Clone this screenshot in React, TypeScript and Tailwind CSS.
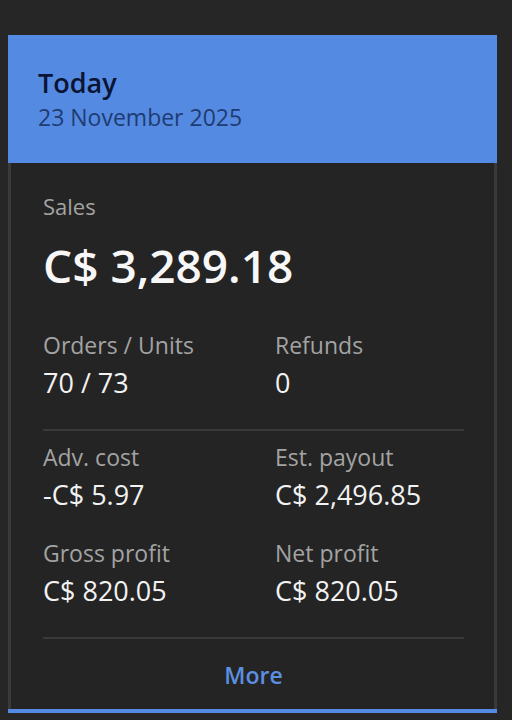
const font = { fontFamily: '"Open Sans", "Noto Sans", sans-serif' }

interface StatProps {
  label: string
  value: string
}

function Stat({ label, value }: StatProps) {
  return (
    <div className="flex flex-col">
      <span className="text-[23px] leading-[31px] text-[#a3a3a3]">{label}</span>
      <span className="mt-[4px] text-[27px] leading-[35px] text-[#f2f2f2]">{value}</span>
    </div>
  )
}

export default function App() {
  return (
    <div className="min-h-screen bg-[#262626] pt-[35px]" style={font}>
      <div className="ml-2 w-[489px]">
        <div className="bg-[#558ae2] pl-[30px] pt-[30px] pb-[30px]">
          <div className="text-[27px] leading-[36px] font-semibold text-[#0a1433]">Today</div>
          <div className="text-[23px] leading-[32px] text-[#1f3c73]">23 November 2025</div>
        </div>

        <div className="bg-[#242424] border-x-[3px] border-[#3a3a3a] pl-[32px] pr-[30px] pt-[28px]">
          <div className="text-[22px] leading-[30px] text-[#a3a3a3]">Sales</div>
          <div className="mt-[16px] text-[46px] leading-[56px] font-semibold text-[#f7f7f7]">
            C$ 3,289.18
          </div>

          <div className="mt-[37px] grid grid-cols-[232px_1fr]">
            <Stat label="Orders / Units" value="70 / 73" />
            <Stat label="Refunds" value="0" />
          </div>

          <div className="mt-[29px] h-[2px] bg-[#3a3a3a]" />

          <div className="mt-[11px] grid grid-cols-[232px_1fr] gap-y-[26px]">
            <Stat label="Adv. cost" value="-C$ 5.97" />
            <Stat label="Est. payout" value="C$ 2,496.85" />
            <Stat label="Gross profit" value="C$ 820.05" />
            <Stat label="Net profit" value="C$ 820.05" />
          </div>

          <div className="mt-[29px] h-[2px] bg-[#3a3a3a]" />

          <div className="pt-[20px] pb-[18px] text-center">
            <button className="text-[23px] leading-[32px] font-semibold text-[#5b8fe0]">More</button>
          </div>
        </div>
        <div className="h-[4px] bg-[#558ae2]" />
      </div>
    </div>
  )
}
